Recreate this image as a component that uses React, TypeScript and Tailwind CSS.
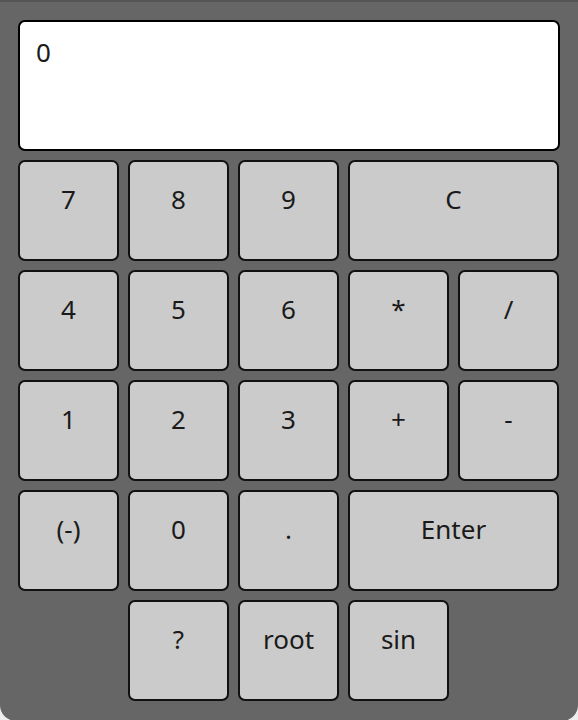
const keys: { label: string; col: string }[] = [
  { label: "7", col: "col-span-1" },
  { label: "8", col: "col-span-1" },
  { label: "9", col: "col-span-1" },
  { label: "C", col: "col-span-2" },
  { label: "4", col: "col-span-1" },
  { label: "5", col: "col-span-1" },
  { label: "6", col: "col-span-1" },
  { label: "*", col: "col-span-1" },
  { label: "/", col: "col-span-1" },
  { label: "1", col: "col-span-1" },
  { label: "2", col: "col-span-1" },
  { label: "3", col: "col-span-1" },
  { label: "+", col: "col-span-1" },
  { label: "-", col: "col-span-1" },
  { label: "(-)", col: "col-span-1" },
  { label: "0", col: "col-span-1" },
  { label: ".", col: "col-span-1" },
  { label: "Enter", col: "col-span-2" },
  { label: "?", col: "col-start-2" },
  { label: "root", col: "col-span-1" },
  { label: "sin", col: "col-span-1" },
];

export default function App() {
  return (
    <div className="min-h-screen bg-[#eeeeee]">
      <div
        className="h-[721px] w-[578px] rounded-b-[16px] border-t-2 border-[#555555] bg-[#666666] pl-[18px] pr-[19px] pt-[18px] text-[#1a1a1a]"
        style={{ fontFamily: '"Noto Sans", sans-serif' }}
      >
        <div className="h-[131px] w-[542px] rounded-[7px] border-2 border-black bg-white pl-[16px] pt-[11px] text-[26px]">
          0
        </div>
        <div className="mt-[9px] grid grid-cols-[repeat(5,101px)] auto-rows-[101px] gap-[9px]">
          {keys.map((k) => (
            <button
              key={k.label}
              type="button"
              className={`${k.col} flex items-center justify-center rounded-[7px] border-2 border-[#111111] bg-[#cbcbcb] pb-[22px] text-[26px] leading-[35px]`}
            >
              {k.label}
            </button>
          ))}
        </div>
      </div>
    </div>
  );
}
